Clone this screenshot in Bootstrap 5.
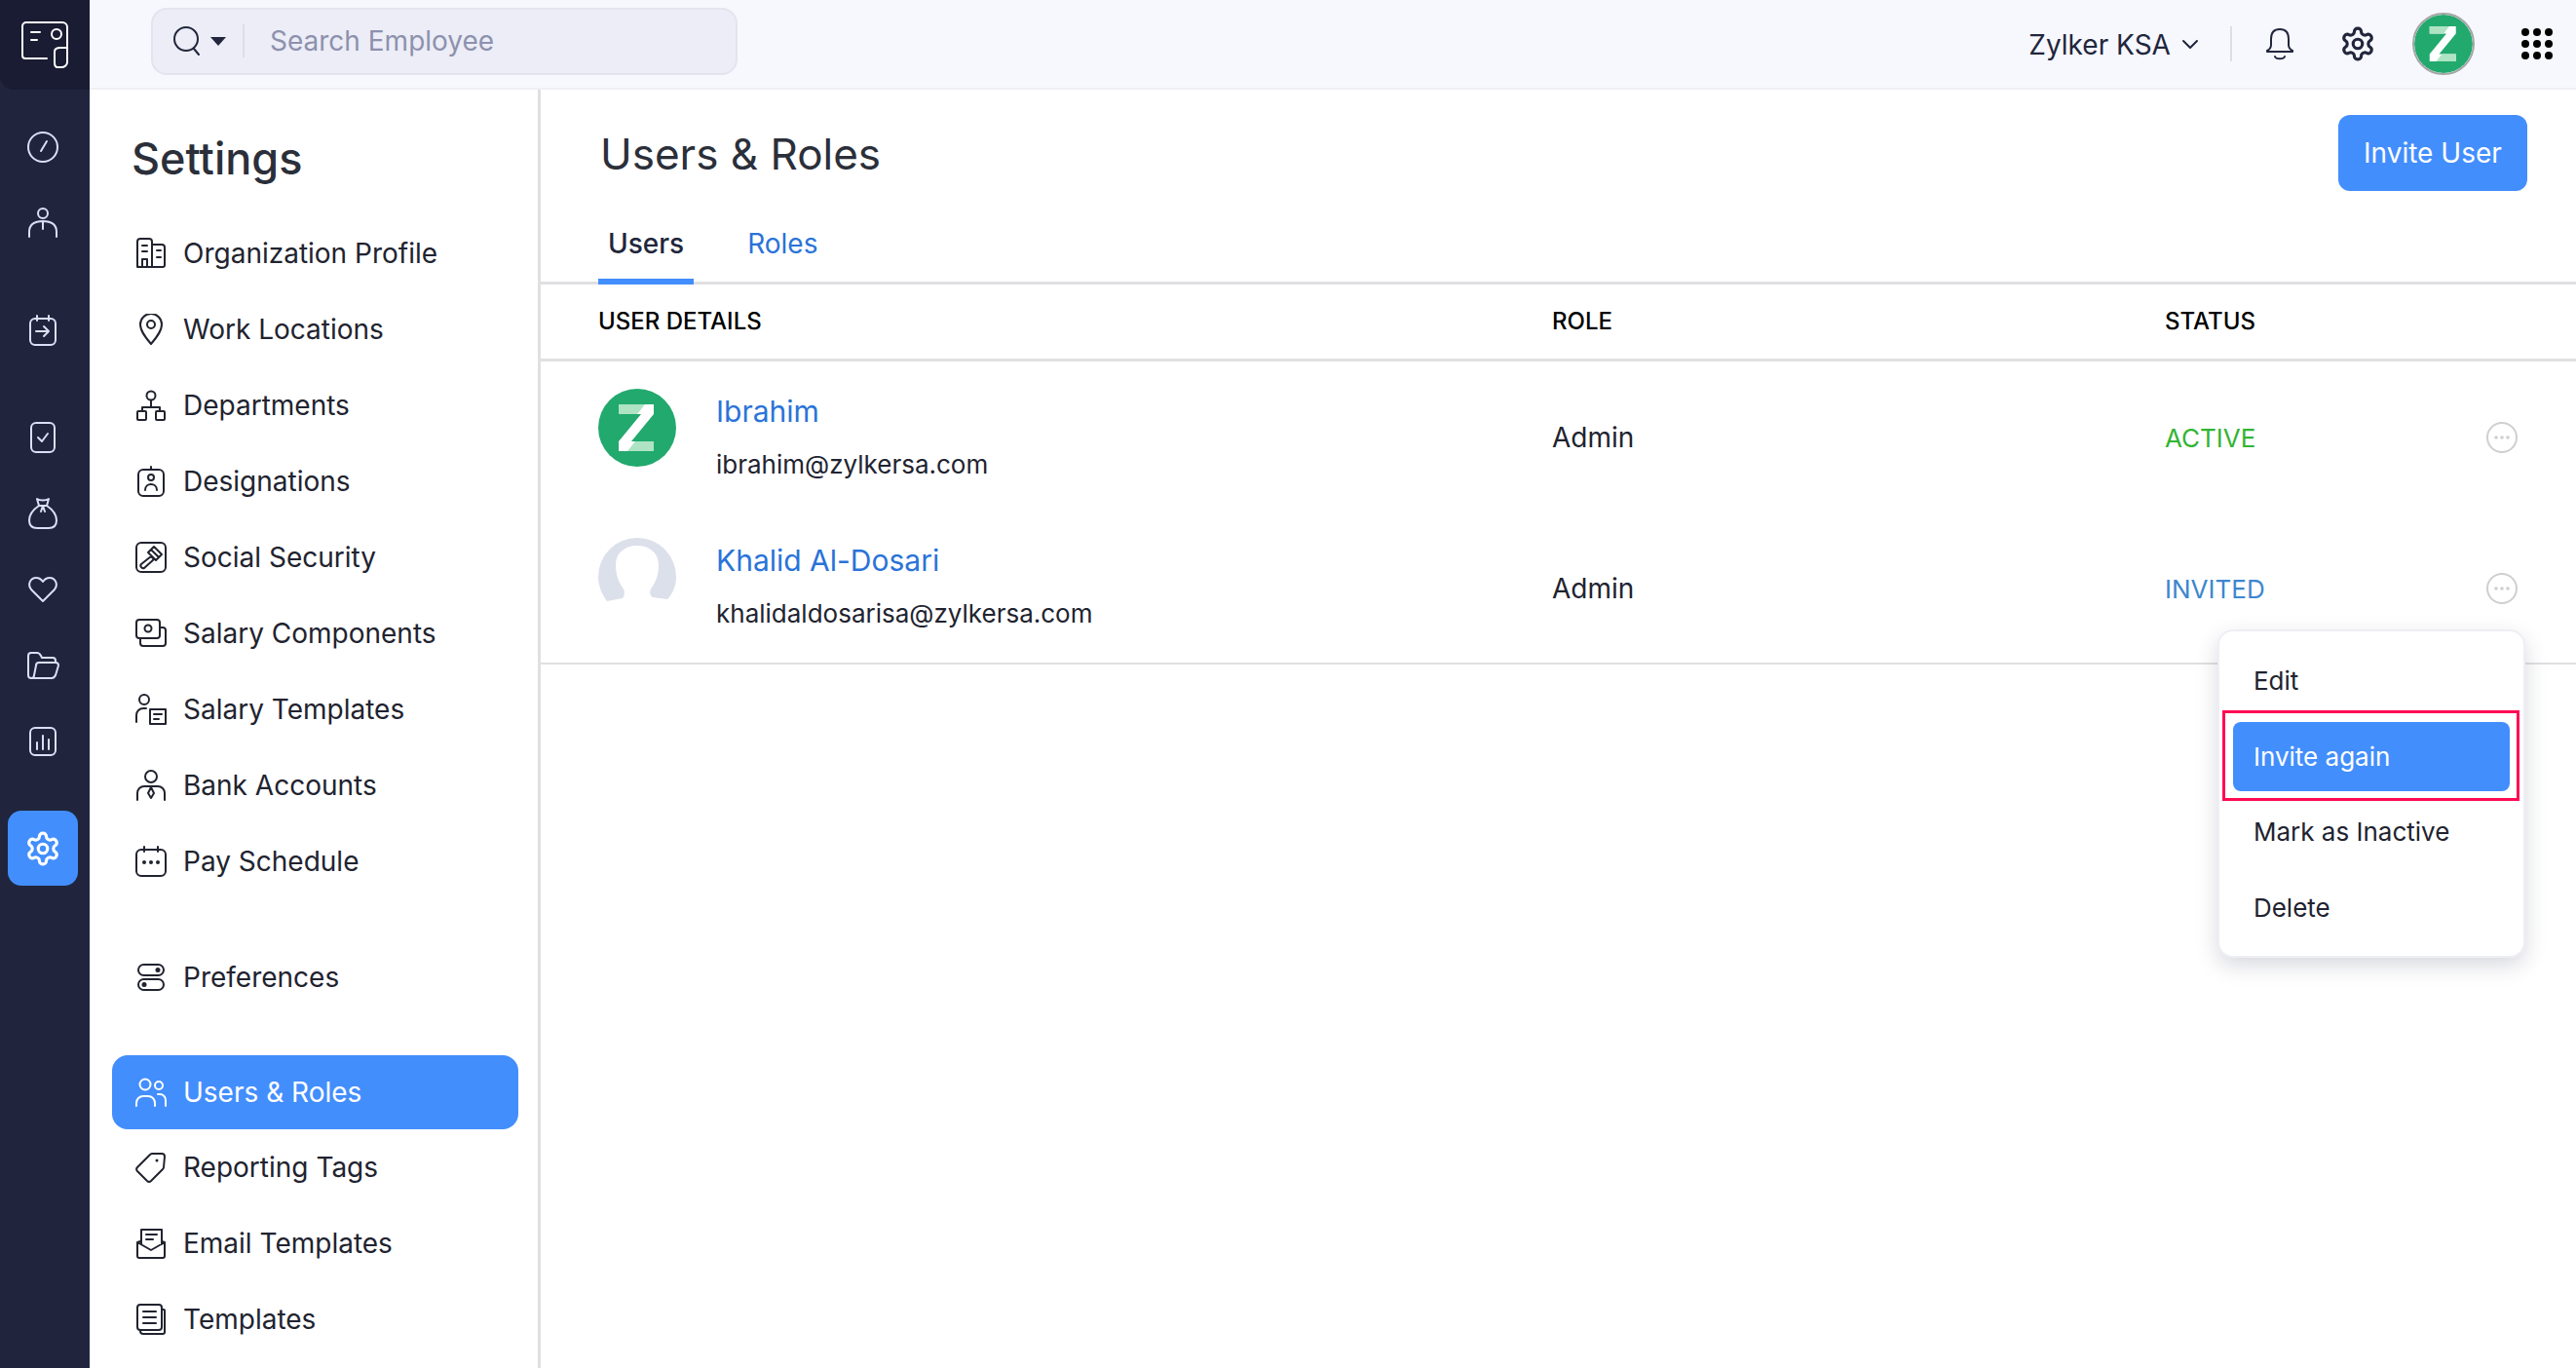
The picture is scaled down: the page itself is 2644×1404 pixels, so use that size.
<!DOCTYPE html>
<html lang="en">
<head>
    <meta charset="UTF-8">
    <title>Users &amp; Roles</title>
    <link href="https://cdn.jsdelivr.net/npm/bootstrap@5.3.0/dist/css/bootstrap.min.css" rel="stylesheet">
    <style>
        html, body { height: 100%; overflow: hidden; }
        body { font-family: Inter, "Liberation Sans", sans-serif; color: #21263c; background: #fff; }
        svg { display: block; flex: none; fill: none; stroke: currentColor; stroke-width: 2; stroke-linecap: round; stroke-linejoin: round; }
        svg .solid { fill: currentColor; stroke: none; }

        .app-shell { height: 1404px; }
        .rail { width: 92px; background: #20253d; color: #d9e0f5; }
        .rail-logo { height: 92px; background: #191c32; color: #fff; border-bottom-left-radius: 14px; }
        .rail-nav { padding-top: 20px; }
        .rail-item { width: 88px; height: 78px; }
        .rail-gap { margin-top: 32px; }
        .rail-active { width: 72px; height: 77px; margin: 32px 0 0 8px; background: #438efd; border-radius: 14px; color: #fff; }

        .top-bar { height: 92px; background: #f7f8fd; border-bottom: 2px solid #eff0f3; }
        .search-box { width: 602px; height: 69px; margin: 0 0 6px 63px; background: #ecedf6; border: 2px solid #e3e4ee; border-radius: 16px; }
        .search-btn { width: 94px; height: 34px; padding-left: 20px; border-right: 2px solid #dcdde8; }
        .search-caret { width: 0; height: 0; margin-left: 9px; border: 8px solid transparent; border-top: 9px solid #21263c; border-bottom: 0; }
        .search-input { padding: 0 0 0 26px; font-size: 28px; color: #21263c; background: transparent; border: 0; }
        .search-input::placeholder { color: #8d91ae; }
        .search-input:focus { background: transparent; box-shadow: none; }
        .org-name { font-size: 28px; line-height: 1; margin-top: 2px; }
        .org-chevron { margin: 2px 32px 0 11px; }
        .bar-divider { width: 2px; height: 36px; background: #dddee6; margin-right: 34px; }
        .bar-gear { margin: 0 37px 0 46px; }
        .bar-avatar { border: 2px solid #a5a5a5; border-radius: 50%; }
        .bar-apps { margin: 0 24px 0 48px; }

        .settings-panel { width: 463px; border-right: 3px solid #e0e0e3; padding: 0 20px 0 23px; }
        .settings-title { margin: 48px 0 36px 20px; font-size: 45px; font-weight: 500; line-height: 1; color: #2b2f3a; }
        .settings-link { height: 78px; padding: 0 0 0 24px; gap: 17px; font-size: 28px; color: #21232f; border-radius: 16px; }
        .settings-link.is-active { height: 76px; background: #438efd; color: #fff; }
        .settings-link.is-active:hover { color: #fff; }
        .settings-link:hover { color: #21232f; }
        .settings-gap { margin-top: 41px; }

        .page-head { padding: 26px 50px 0 61px; height: 116px; }
        .page-title { font-size: 44px; font-weight: 400; line-height: 1; color: #2b2f3a; padding-top: 18px; }
        .invite-btn { width: 194px; height: 78px; font-size: 28px; background: #438efd; border: 0; border-radius: 12px; }
        .user-tabs { padding-left: 59px; height: 84px; border-bottom: 3px solid #e0e0e3; }
        .user-tab { height: 84px; padding: 6px 10px 0; margin: 0 45px -3px 0; font-size: 28px; font-weight: 500; color: #21263c; border-bottom: 6px solid transparent; }
        .user-tab.is-current { border-bottom-color: #438efd; }
        .user-tab.is-link { font-weight: 400; color: #2a73d8; }

        .user-table { width: 100%; table-layout: fixed; margin: 0; }
        .user-table th { height: 77px; padding: 0; font-size: 24px; font-weight: 500; color: #000; border-bottom: 3px solid #e0e0e3; vertical-align: middle; }
        .user-table td { height: 155px; padding: 4px 0 0; font-size: 28px; color: #21232f; border: 0; vertical-align: middle; }
        .user-table td.status-active { color: #33b433; font-size: 26px; }
        .user-table td.status-invited { color: #3d86cf; font-size: 26px; }
        .user-table td.col-details { padding-top: 0; }
        .user-table tr:last-child td { height: 157px; border-bottom: 2px solid #e0e0e3; }
        .col-details { width: 1038px; padding-left: 59px !important; }
        .col-role { width: 629px; }
        .user-name { display: block; font-size: 30px; line-height: 1; color: #2a73d8; text-decoration: none; margin-top: 36px; }
        .user-mail { margin-top: 27px; line-height: 1; font-size: 26px; }
        .user-pic { margin-top: 28px; margin-right: 41px; }
        .more-btn { width: 32px; height: 32px; margin-left: 2px; color: #cfcfcf; }

        .table-wrap { position: relative; }
        .row-menu { display: block; position: absolute; top: 354px; right: 52px; width: 316px; padding: 11px 5px; border: 2px solid #eeeef5; border-radius: 16px; box-shadow: 0 8px 22px rgba(40, 44, 70, .18); }
        .row-menu .dropdown-item { height: 78px; padding: 0 0 0 30px; display: flex; align-items: center; font-size: 26px; color: #21232f; }
        .menu-mark { border: 3px solid #ff0a54; height: 93px; margin: -8px -1px -8px -2px; padding: 9px 7px 9px 8px; position: relative; }
        .row-menu .menu-mark .dropdown-item { height: 71px; padding-left: 21px; background: #438efd; color: #fff; border-radius: 8px; }
    </style>
</head>
<body>
<div class="app-shell d-flex">

    <aside class="rail d-flex flex-column flex-shrink-0">
        <div class="rail-logo d-flex align-items-center justify-content-center">
            <svg width="48" height="48" viewBox="0 0 48 48" stroke-width="3">
                <path d="M26 38H4a3 3 0 0 1-3-3V5a4 4 0 0 1 4-4h37a5 5 0 0 1 5 5v22"/>
                <path d="M47 28v14c0 3-3 5-6 5h-4c-3 0-3-3-3-5V31c0-3 3-4 6-4h7"/>
                <circle cx="36" cy="13" r="5"/>
                <path d="M10 11h9M10 19h6"/>
            </svg>
        </div>
        <div class="rail-nav d-flex flex-column">
            <div class="rail-item d-flex align-items-center justify-content-center">
                <svg width="34" height="34" viewBox="0 0 34 34"><circle cx="17" cy="17" r="15"/><path d="M15 21l6-10"/></svg>
            </div>
            <div class="rail-item d-flex align-items-center justify-content-center">
                <svg width="30" height="32" viewBox="0 0 30 32"><circle cx="15" cy="6" r="5"/><path d="M1 30v-5c0-8 6-11 14-11s14 3 14 11v5M15 15v7"/></svg>
            </div>
            <div class="rail-item rail-gap d-flex align-items-center justify-content-center">
                <svg width="30" height="34" viewBox="0 0 30 34"><rect x="2" y="5" width="26" height="27" rx="5"/><path d="M9 2v5M21 2v5M8 18h13M16 13l5 5-5 5"/></svg>
            </div>
            <div class="rail-item rail-gap d-flex align-items-center justify-content-center">
                <svg width="28" height="34" viewBox="0 0 28 34"><rect x="2" y="2" width="24" height="30" rx="5"/><path d="M9 17l4 4 6-8"/></svg>
            </div>
            <div class="rail-item d-flex align-items-center justify-content-center">
                <svg width="30" height="34" viewBox="0 0 30 34"><path d="M9 2c3 2 9 2 12 0l-2 7c6 4 10 10 10 15 0 5-3 8-8 8H9c-5 0-8-3-8-8 0-5 4-11 10-15L9 2zM11 9h8M15 9l-2 6M15 9l2 6"/></svg>
            </div>
            <div class="rail-item d-flex align-items-center justify-content-center">
                <svg width="30" height="28" viewBox="0 0 30 28"><path d="M15 26L3 14C-1 9 2 2 8 2c3 0 5 1 7 4 2-3 4-4 7-4 6 0 9 7 5 12L15 26z"/></svg>
            </div>
            <div class="rail-item d-flex align-items-center justify-content-center">
                <svg width="34" height="30" viewBox="0 0 34 30"><path d="M5 28a3 3 0 0 1-3-3V5a3 3 0 0 1 3-3h6c2 0 3 1 4 3l1 2h11a3 3 0 0 1 3 3v2"/><path d="M5 28c2 0 3-1 3-3l2-10c0-2 1-3 3-3h17a3 3 0 0 1 3 3l-3 10c-1 2-2 3-4 3H5z"/></svg>
            </div>
            <div class="rail-item d-flex align-items-center justify-content-center">
                <svg width="30" height="32" viewBox="0 0 30 32"><rect x="2" y="2" width="26" height="28" rx="5"/><path d="M9 17v7M15 10v14M21 14v10"/></svg>
            </div>
            <div class="rail-active d-flex align-items-center justify-content-center">
                <svg width="38" height="38" viewBox="0 0 24 24" stroke-width="1.5"><path d="M12.22 2h-.44a2 2 0 0 0-2 2v.18a2 2 0 0 1-1 1.73l-.43.25a2 2 0 0 1-2 0l-.15-.08a2 2 0 0 0-2.73.73l-.22.38a2 2 0 0 0 .73 2.73l.15.1a2 2 0 0 1 1 1.72v.51a2 2 0 0 1-1 1.74l-.15.09a2 2 0 0 0-.73 2.73l.22.38a2 2 0 0 0 2.73.73l.15-.08a2 2 0 0 1 2 0l.43.25a2 2 0 0 1 1 1.73V20a2 2 0 0 0 2 2h.44a2 2 0 0 0 2-2v-.18a2 2 0 0 1 1-1.73l.43-.25a2 2 0 0 1 2 0l.15.08a2 2 0 0 0 2.73-.73l.22-.39a2 2 0 0 0-.73-2.73l-.15-.08a2 2 0 0 1-1-1.74v-.5a2 2 0 0 1 1-1.74l.15-.09a2 2 0 0 0 .73-2.73l-.22-.38a2 2 0 0 0-2.73-.73l-.15.08a2 2 0 0 1-2 0l-.43-.25a2 2 0 0 1-1-1.73V4a2 2 0 0 0-2-2z"/><circle cx="12" cy="12" r="3"/></svg>
            </div>
        </div>
    </aside>

    <div class="flex-grow-1 d-flex flex-column" style="min-width:0">
        <header class="top-bar d-flex align-items-center flex-shrink-0">
            <div class="search-box d-flex align-items-center">
                <div class="search-btn d-flex align-items-center flex-shrink-0">
                    <svg width="30" height="32" viewBox="0 0 30 32"><circle cx="14" cy="14" r="12"/><path d="M22 24l5 6"/></svg>
                    <span class="search-caret"></span>
                </div>
                <input class="form-control search-input" type="text" placeholder="Search Employee">
            </div>
            <div class="ms-auto d-flex align-items-center">
                <span class="org-name">Zylker KSA</span>
                <svg class="org-chevron" width="18" height="12" viewBox="0 0 18 12"><path d="M2 2l7 7 7-7"/></svg>
                <span class="bar-divider"></span>
                <svg width="30" height="34" viewBox="0 0 30 34"><path d="M15 2c-6 0-9 4-9 10v6c0 3-2 5-4 6v1h26v-1c-2-1-4-3-4-6v-6c0-6-3-10-9-10zM10 30c1 3 9 3 10 0"/></svg>
                <svg class="bar-gear" width="38" height="38" viewBox="0 0 24 24" stroke-width="1.3"><path d="M12.22 2h-.44a2 2 0 0 0-2 2v.18a2 2 0 0 1-1 1.73l-.43.25a2 2 0 0 1-2 0l-.15-.08a2 2 0 0 0-2.73.73l-.22.38a2 2 0 0 0 .73 2.73l.15.1a2 2 0 0 1 1 1.72v.51a2 2 0 0 1-1 1.74l-.15.09a2 2 0 0 0-.73 2.73l.22.38a2 2 0 0 0 2.73.73l.15-.08a2 2 0 0 1 2 0l.43.25a2 2 0 0 1 1 1.73V20a2 2 0 0 0 2 2h.44a2 2 0 0 0 2-2v-.18a2 2 0 0 1 1-1.73l.43-.25a2 2 0 0 1 2 0l.15.08a2 2 0 0 0 2.73-.73l.22-.39a2 2 0 0 0-.73-2.73l-.15-.08a2 2 0 0 1-1-1.74v-.5a2 2 0 0 1 1-1.74l.15-.09a2 2 0 0 0 .73-2.73l-.22-.38a2 2 0 0 0-2.73-.73l-.15.08a2 2 0 0 1-2 0l-.43-.25a2 2 0 0 1-1-1.73V4a2 2 0 0 0-2-2z"/><circle cx="12" cy="12" r="3"/></svg>
                <svg class="bar-avatar" width="64" height="64" viewBox="0 0 80 80" style="stroke:none"><circle cx="40" cy="40" r="40" fill="#22a96e"/><path fill="#fff" d="M21 16h36v10L34 54h23v10H21V54l23-28H21z"/><path fill="#aee3c4" d="M21 16h27l-8 10H21zM57 64H30l8-10h19z"/></svg>
                <svg class="bar-apps" width="32" height="32" viewBox="0 0 32 32" style="stroke:none"><g fill="#000"><circle cx="4" cy="4" r="4"/><circle cx="16" cy="4" r="4"/><circle cx="28" cy="4" r="4"/><circle cx="4" cy="16" r="4"/><circle cx="16" cy="16" r="4"/><circle cx="28" cy="16" r="4"/><circle cx="4" cy="28" r="4"/><circle cx="16" cy="28" r="4"/><circle cx="28" cy="28" r="4"/></g></svg>
            </div>
        </header>

        <div class="d-flex flex-grow-1" style="min-height:0">
            <nav class="settings-panel flex-shrink-0 overflow-hidden">
                <h1 class="settings-title">Settings</h1>
                <div class="nav flex-column flex-nowrap">
                    <a class="nav-link settings-link d-flex align-items-center" href="#">
                        <svg width="32" height="32" viewBox="0 0 32 32"><path d="M2 30V4a3 3 0 0 1 3-3h9a3 3 0 0 1 3 3v26M17 7h10a3 3 0 0 1 3 3v18a2 2 0 0 1-2 2H4a2 2 0 0 1-2-2M7 8h5M7 14h5M7 30v-8h5v8M22 13h4M22 20h4"/></svg>
                        Organization Profile
                    </a>
                    <a class="nav-link settings-link d-flex align-items-center" href="#">
                        <svg width="32" height="32" viewBox="0 0 32 32"><path d="M16 31C11 25 5 18 5 11a11 11 0 0 1 22 0c0 7-6 14-11 20z"/><circle cx="16" cy="11" r="4"/></svg>
                        Work Locations
                    </a>
                    <a class="nav-link settings-link d-flex align-items-center" href="#">
                        <svg width="32" height="32" viewBox="0 0 32 32"><circle cx="16" cy="6" r="4.5"/><path d="M16 11v7M7 22v-4h18v4"/><rect x="2" y="22" width="9" height="9" rx="1"/><rect x="21" y="22" width="9" height="9" rx="1"/></svg>
                        Departments
                    </a>
                    <a class="nav-link settings-link d-flex align-items-center" href="#">
                        <svg width="32" height="32" viewBox="0 0 32 32"><rect x="3" y="4" width="26" height="27" rx="5"/><path d="M16 1v2M10 25c0-4 3-6 6-6s6 2 6 6"/><circle cx="16" cy="12" r="3"/></svg>
                        Designations
                    </a>
                    <a class="nav-link settings-link d-flex align-items-center" href="#">
                        <svg width="32" height="32" viewBox="0 0 32 32"><rect x="1" y="1" width="30" height="30" rx="5"/><path d="M6 23l10-8 3 3-10 9c-2 1-5-2-3-4zM13 11l6-6 8 8-6 6zM16 8l8 8"/></svg>
                        Social Security
                    </a>
                    <a class="nav-link settings-link d-flex align-items-center" href="#">
                        <svg width="32" height="32" viewBox="0 0 32 32"><rect x="1" y="2" width="24" height="19" rx="3"/><circle cx="13" cy="11" r="3.5"/><path d="M25 10h3a3 3 0 0 1 3 3v13a3 3 0 0 1-3 3H8a3 3 0 0 1-3-3v-5"/></svg>
                        Salary Components
                    </a>
                    <a class="nav-link settings-link d-flex align-items-center" href="#">
                        <svg width="32" height="32" viewBox="0 0 32 32"><circle cx="9" cy="6" r="5"/><path d="M1 29v-7a7 7 0 0 1 7-7h3"/><rect x="15" y="16" width="16" height="15"/><path d="M19 21h8M19 26h5"/></svg>
                        Salary Templates
                    </a>
                    <a class="nav-link settings-link d-flex align-items-center" href="#">
                        <svg width="32" height="32" viewBox="0 0 32 32"><circle cx="16" cy="7" r="6"/><path d="M2 31v-7a7 7 0 0 1 7-7h14a7 7 0 0 1 7 7v7M16 18l-3 6 3 5 3-5z"/></svg>
                        Bank Accounts
                    </a>
                    <a class="nav-link settings-link d-flex align-items-center" href="#">
                        <svg width="32" height="32" viewBox="0 0 32 32"><rect x="1" y="4" width="30" height="27" rx="5"/><path d="M9 1v5M23 1v5"/><g class="solid"><circle cx="9" cy="17" r="2"/><circle cx="16" cy="17" r="2"/><circle cx="23" cy="17" r="2"/></g></svg>
                        Pay Schedule
                    </a>
                    <a class="nav-link settings-link settings-gap d-flex align-items-center" href="#">
                        <svg width="32" height="32" viewBox="0 0 32 32"><rect x="3" y="3" width="26" height="11" rx="5.5"/><rect x="3" y="18" width="26" height="11" rx="5.5"/><g class="solid"><circle cx="23" cy="8.5" r="2.5"/><circle cx="9" cy="23.5" r="2.5"/></g></svg>
                        Preferences
                    </a>
                    <a class="nav-link settings-link settings-gap is-active d-flex align-items-center" href="#">
                        <svg width="32" height="32" viewBox="0 0 32 32"><circle cx="10" cy="8" r="5.5"/><circle cx="24" cy="9" r="4"/><path d="M1 30v-3a7 7 0 0 1 7-7h5a7 7 0 0 1 7 7v3M23 18h2a6 6 0 0 1 6 6v6"/></svg>
                        Users &amp; Roles
                    </a>
                    <a class="nav-link settings-link d-flex align-items-center" href="#">
                        <svg width="32" height="32" viewBox="0 0 32 32"><path d="M2 16L15 3a3 3 0 0 1 2-1h10a3 3 0 0 1 3 3l-1 11a3 3 0 0 1-1 2L16 30a3 3 0 0 1-4 0L2 20a3 3 0 0 1 0-4z"/><circle class="solid" cx="22" cy="9" r="1.5"/></svg>
                        Reporting Tags
                    </a>
                    <a class="nav-link settings-link d-flex align-items-center" href="#">
                        <svg width="32" height="32" viewBox="0 0 32 32"><path d="M5 14L2 15v14a2 2 0 0 0 2 2h24a2 2 0 0 0 2-2V15l-3-1M2 15l14 8 14-8M6 17V2h21v15M11 7h11M11 12h7"/></svg>
                        Email Templates
                    </a>
                    <a class="nav-link settings-link d-flex align-items-center" href="#">
                        <svg width="32" height="32" viewBox="0 0 32 32"><rect x="2" y="1" width="25" height="26" rx="3"/><path d="M27 6h2a1 1 0 0 1 1 1v22a2 2 0 0 1-2 2H8a3 3 0 0 1-3-3v-1M8 8h13M8 14h13M8 20h13"/></svg>
                        Templates
                    </a>
                </div>
            </nav>

            <main class="flex-grow-1" style="min-width:0">
                <div class="page-head d-flex justify-content-between align-items-start">
                    <h2 class="page-title mb-0">Users &amp; Roles</h2>
                    <button class="btn btn-primary invite-btn" type="button">Invite User</button>
                </div>
                <div class="user-tabs d-flex">
                    <span class="user-tab is-current d-flex align-items-center">Users</span>
                    <span class="user-tab is-link d-flex align-items-center">Roles</span>
                </div>
                <div class="table-wrap">
                    <table class="table user-table">
                        <thead>
                            <tr>
                                <th class="col-details">USER DETAILS</th>
                                <th class="col-role">ROLE</th>
                                <th>STATUS</th>
                                <th style="width:94px"></th>
                            </tr>
                        </thead>
                        <tbody>
                            <tr>
                                <td class="col-details align-top">
                                    <div class="d-flex">
                                        <svg class="user-pic" width="80" height="80" viewBox="0 0 80 80" style="stroke:none"><circle cx="40" cy="40" r="40" fill="#22a96e"/><path fill="#fff" d="M21 16h36v10L34 54h23v10H21V54l23-28H21z"/><path fill="#aee3c4" d="M21 16h27l-8 10H21zM57 64H30l8-10h19z"/></svg>
                                        <div>
                                            <a class="user-name" href="#">Ibrahim</a>
                                            <div class="user-mail">ibrahim@zylkersa.com</div>
                                        </div>
                                    </div>
                                </td>
                                <td>Admin</td>
                                <td class="status-active">ACTIVE</td>
                                <td><svg class="more-btn" viewBox="0 0 32 32"><circle cx="16" cy="16" r="15"/><g class="solid"><circle cx="10" cy="16" r="1.8"/><circle cx="16" cy="16" r="1.8"/><circle cx="22" cy="16" r="1.8"/></g></svg></td>
                            </tr>
                            <tr>
                                <td class="col-details align-top">
                                    <div class="d-flex">
                                        <svg class="user-pic" width="80" height="80" viewBox="0 0 80 80" style="stroke:none"><path fill="#dce0eb" d="M9 65C3 57 0 48 0 40a40 40 0 0 1 80 0c0 8-3 17-9 23l-15-2c-3-2-4-6-1-10 5-7 7-15 7-23C62 15 52 8 40 8S18 15 18 28c0 8 2 16 7 23 3 4 2 9 0 11z"/></svg>
                                        <div>
                                            <a class="user-name" href="#">Khalid Al-Dosari</a>
                                            <div class="user-mail">khalidaldosarisa@zylkersa.com</div>
                                        </div>
                                    </div>
                                </td>
                                <td>Admin</td>
                                <td class="status-invited">INVITED</td>
                                <td><svg class="more-btn" viewBox="0 0 32 32"><circle cx="16" cy="16" r="15"/><g class="solid"><circle cx="10" cy="16" r="1.8"/><circle cx="16" cy="16" r="1.8"/><circle cx="22" cy="16" r="1.8"/></g></svg></td>
                            </tr>
                        </tbody>
                    </table>
                    <ul class="dropdown-menu row-menu show list-unstyled">
                        <li><a class="dropdown-item" href="#">Edit</a></li>
                        <li class="menu-mark"><a class="dropdown-item" href="#">Invite again</a></li>
                        <li><a class="dropdown-item" href="#">Mark as Inactive</a></li>
                        <li><a class="dropdown-item" href="#">Delete</a></li>
                    </ul>
                </div>
            </main>
        </div>
    </div>
</div>
<script src="https://cdn.jsdelivr.net/npm/bootstrap@5.3.0/dist/js/bootstrap.bundle.min.js"></script>
</body>
</html>
